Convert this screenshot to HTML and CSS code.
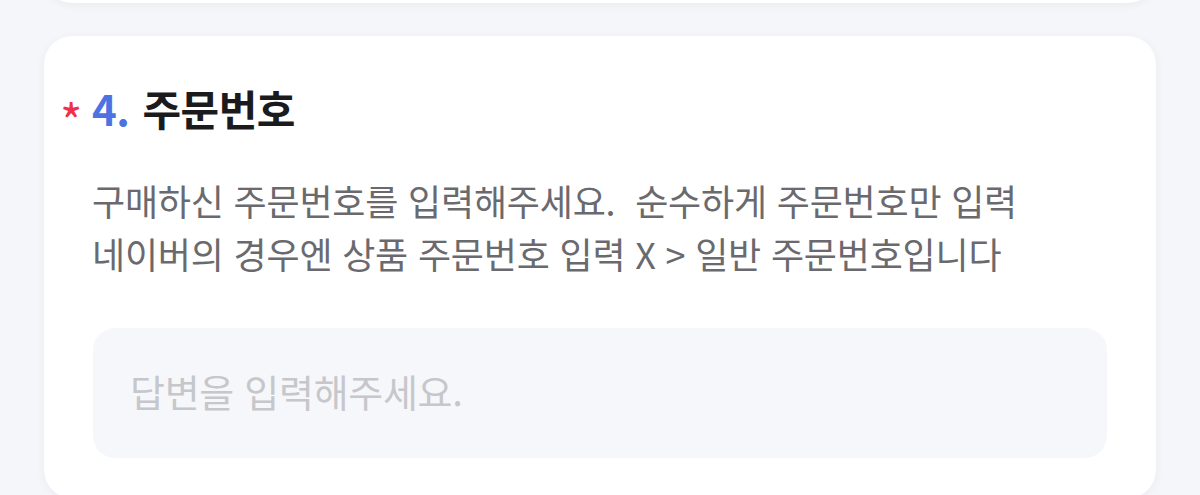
FILE: index.html
```html
<!DOCTYPE html>
<html lang="ko">
<head>
<meta charset="utf-8">
<link rel="stylesheet" href="styles.css">
</head>
<body>
<div class="page">
  <div class="card card-prev"></div>
  <div class="card">
    <h2 class="title"><span class="req">*</span><span class="num">4.</span><span class="label">주문번호</span></h2>
    <p class="desc">구매하신 주문번호를 입력해주세요.&nbsp; 순수하게 주문번호만 입력<br>네이버의 경우엔 상품 주문번호 입력 X &gt; 일반 주문번호입니다</p>
    <div class="answer"><span class="placeholder">답변을 입력해주세요.</span></div>
  </div>
</div>
</body>
</html>
```
FILE: styles.css
```css
html, body {
  margin: 0;
  padding: 0;
  background: #f5f6f9;
  font-family: "Noto Sans CJK KR", "Noto Sans", sans-serif;
  overflow: hidden;
}
.page {
  display: flex;
  flex-direction: column;
  gap: 33px;
  padding: 0 44px;
  height: 495px;
}
.card {
  background: #fff;
  border-radius: 28px;
  box-shadow: 0 2px 10px rgba(30, 40, 80, 0.05);
  padding: 48px 49px 40px 16px;
  flex-shrink: 0;
}
.card-prev {
  height: 100px;
  margin-top: -97px;
  padding: 0;
}
.title {
  margin: 0;
  font-size: 42px;
  font-weight: 700;
  line-height: 48px;
  height: 48px;
  letter-spacing: -0.5px;
  white-space: nowrap;
}
.req {
  color: #f0304a;
  font-size: 48px;
  font-weight: 400;
  line-height: 0;
  margin-right: 10px;
  vertical-align: -14px;
}
.num {
  color: #4d72e3;
  margin-right: 13px;
}
.label {
  color: #1b1b1d;
}
.desc {
  margin: 42px 0 0 32px;
  font-size: 36px;
  line-height: 53px;
  color: #6a6a6e;
  letter-spacing: -0.2px;
  white-space: nowrap;
}
.answer {
  margin: 48px 0 0 33px;
  height: 130px;
  box-sizing: border-box;
  background: #f6f7fa;
  border-radius: 22px;
  display: flex;
  align-items: center;
  padding: 0 0 6px 37px;
}
.placeholder {
  font-size: 38px;
  color: #c6c7cb;
  letter-spacing: -0.3px;
}
```
